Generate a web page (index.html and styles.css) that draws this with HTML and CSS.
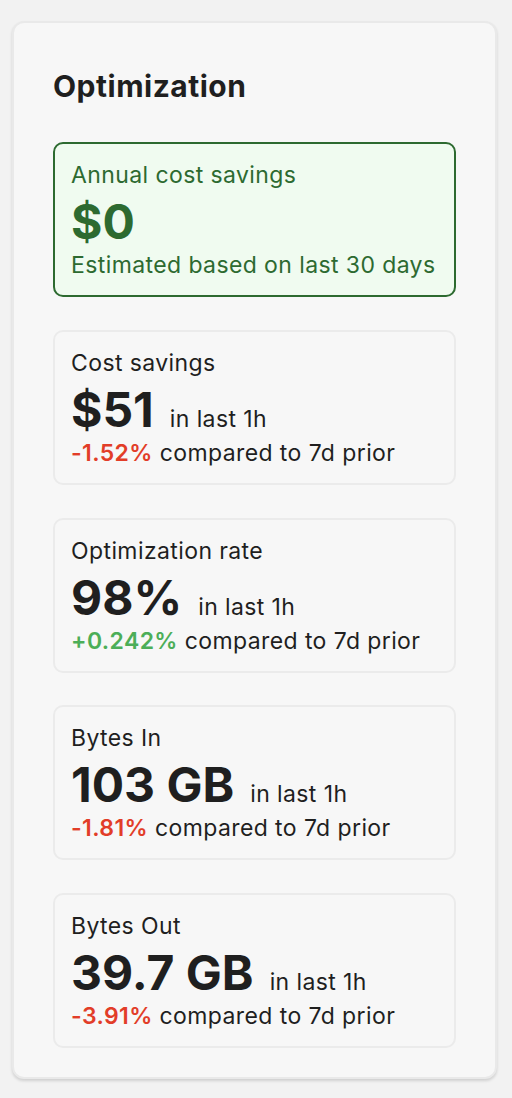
FILE: index.html
```html
<!DOCTYPE html>
<html>
<head>
<meta charset="utf-8">
<link rel="stylesheet" href="styles.css">
</head>
<body>
<div class="panel">
  <h2 class="title">Optimization</h2>
  <div class="stack">
    <div class="box box-green">
      <div class="label">Annual cost savings</div>
      <div class="valrow"><span class="big">$0</span></div>
      <div class="sub">Estimated based on last 30 days</div>
    </div>
    <div class="box">
      <div class="label">Cost savings</div>
      <div class="valrow"><span class="big">$51</span><span class="period">in last 1h</span></div>
      <div class="sub"><span class="neg">-1.52%</span> compared to 7d prior</div>
    </div>
    <div class="box">
      <div class="label">Optimization rate</div>
      <div class="valrow"><span class="big">98%</span><span class="period">in last 1h</span></div>
      <div class="sub"><span class="pos">+0.242%</span> compared to 7d prior</div>
    </div>
    <div class="box">
      <div class="label">Bytes In</div>
      <div class="valrow"><span class="big">103 GB</span><span class="period">in last 1h</span></div>
      <div class="sub"><span class="neg">-1.81%</span> compared to 7d prior</div>
    </div>
    <div class="box">
      <div class="label">Bytes Out</div>
      <div class="valrow"><span class="big">39.7 GB</span><span class="period">in last 1h</span></div>
      <div class="sub"><span class="neg">-3.91%</span> compared to 7d prior</div>
    </div>
  </div>
</div>
</body>
</html>
```
FILE: styles.css
```css
html, body {
  margin: 0;
  padding: 0;
  background: #f2f2f2;
}
body {
  padding: 21px 15px 16px 12px;
  font-family: Inter, "Noto Sans", sans-serif;
  color: #1f1f1f;
}
.panel {
  width: 485px;
  box-sizing: border-box;
  background: #f7f7f7;
  border: 2px solid #e9e9e9;
  border-radius: 12px;
  box-shadow: 0 2px 3px rgba(0, 0, 0, 0.14);
  padding: 45px 39px 29px 39px;
}
.title {
  margin: 0 0 38px 0;
  font-size: 30px;
  font-weight: 700;
  line-height: 36px;
  letter-spacing: 0.5px;
}
.stack {
  display: flex;
  flex-direction: column;
  gap: 32.75px;
}
.box {
  border: 2px solid #ebebeb;
  border-radius: 10px;
  padding: 16px 16px 0 16px;
  height: 155px;
  box-sizing: border-box;
}
.box-green {
  background: #f0fbf0;
  border-color: #2d6a30;
  color: #2d6a30;
}
.label {
  font-size: 23px;
  line-height: 31px;
  letter-spacing: 0.4px;
}
.valrow {
  display: flex;
  align-items: baseline;
  height: 60px;
}
.big {
  font-size: 48px;
  font-weight: 700;
  line-height: 61px;
}
.period {
  font-size: 23px;
  letter-spacing: 0.4px;
  margin-left: 16px;
}
.sub {
  font-size: 23px;
  line-height: 28px;
  letter-spacing: 0.4px;
}
.neg {
  color: #e23d28;
  font-weight: 600;
}
.pos {
  color: #4cae58;
  font-weight: 600;
}
```
